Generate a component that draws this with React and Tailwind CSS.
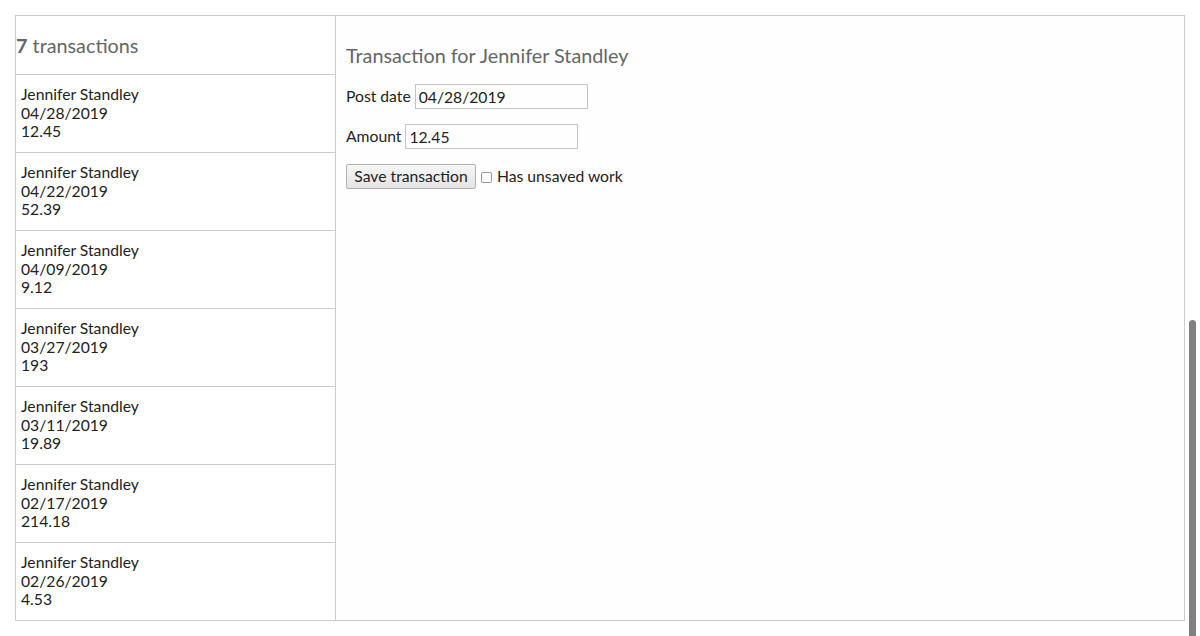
import React from "react";

const transactions = [
  { name: "Jennifer Standley", date: "04/28/2019", amount: "12.45" },
  { name: "Jennifer Standley", date: "04/22/2019", amount: "52.39" },
  { name: "Jennifer Standley", date: "04/09/2019", amount: "9.12" },
  { name: "Jennifer Standley", date: "03/27/2019", amount: "193" },
  { name: "Jennifer Standley", date: "03/11/2019", amount: "19.89" },
  { name: "Jennifer Standley", date: "02/17/2019", amount: "214.18" },
  { name: "Jennifer Standley", date: "02/26/2019", amount: "4.53" },
];

const App = () => {
  return (
    <div className="relative h-[636px] overflow-hidden bg-white font-['Lato',sans-serif] text-[15.7px] text-[#222]">
      <div className="pt-[15px] pl-[15px]">
        <div className="flex w-[1170px] h-[606px] border border-[#ccc]">
          <div className="w-[320px] border-r border-[#ccc] flex flex-col">
            <div className="h-[59px] border-b border-[#ccc] flex items-center pt-[1px] text-[19.8px] text-[#666]">
              <span className="font-bold">7</span>&nbsp;transactions
            </div>
            {transactions.map((t, i) => (
              <div
                key={i}
                className="h-[78px] border-b border-[#ccc] last:border-b-0 last:h-[77px] pl-[5px] pt-[10px] leading-[18.5px]"
              >
                <div>{t.name}</div>
                <div>{t.date}</div>
                <div>{t.amount}</div>
              </div>
            ))}
          </div>
          <div className="flex-1 pl-[10px] pt-[27px] bg-[#fefefe]">
            <h2 className="text-[19.8px] text-[#666] leading-[24px]">Transaction for Jennifer Standley</h2>
            <div className="flex items-center gap-[4px] mt-[17px] h-[25px]">
              <span>Post date</span>
              <input
                readOnly
                value="04/28/2019"
                className="w-[173px] h-[25px] border border-[#c4c4c4] px-[3px] text-[15.7px] outline-none"
              />
            </div>
            <div className="flex items-center gap-[4px] mt-[15px] h-[25px]">
              <span>Amount</span>
              <input
                readOnly
                value="12.45"
                className="w-[173px] h-[25px] border border-[#c4c4c4] px-[3px] text-[15.7px] outline-none"
              />
            </div>
            <div className="flex items-center mt-[15px] h-[25px]">
              <button className="h-[25px] w-[130px] border border-[#b0b0b0] rounded-[2px] bg-gradient-to-b from-[#f6f6f6] to-[#e4e4e4] text-[15.7px] text-[#222]">
                Save transaction
              </button>
              <span className="ml-[5px] w-[11px] h-[11px] border border-[#999] rounded-[2px] bg-white mt-[1px]" />
              <span className="ml-[5px]">Has unsaved work</span>
            </div>
          </div>
        </div>
      </div>
      <div className="absolute right-[4px] top-[320px] w-[7px] h-[330px] rounded-full bg-[#808080]" />
    </div>
  );
};

export default App;
